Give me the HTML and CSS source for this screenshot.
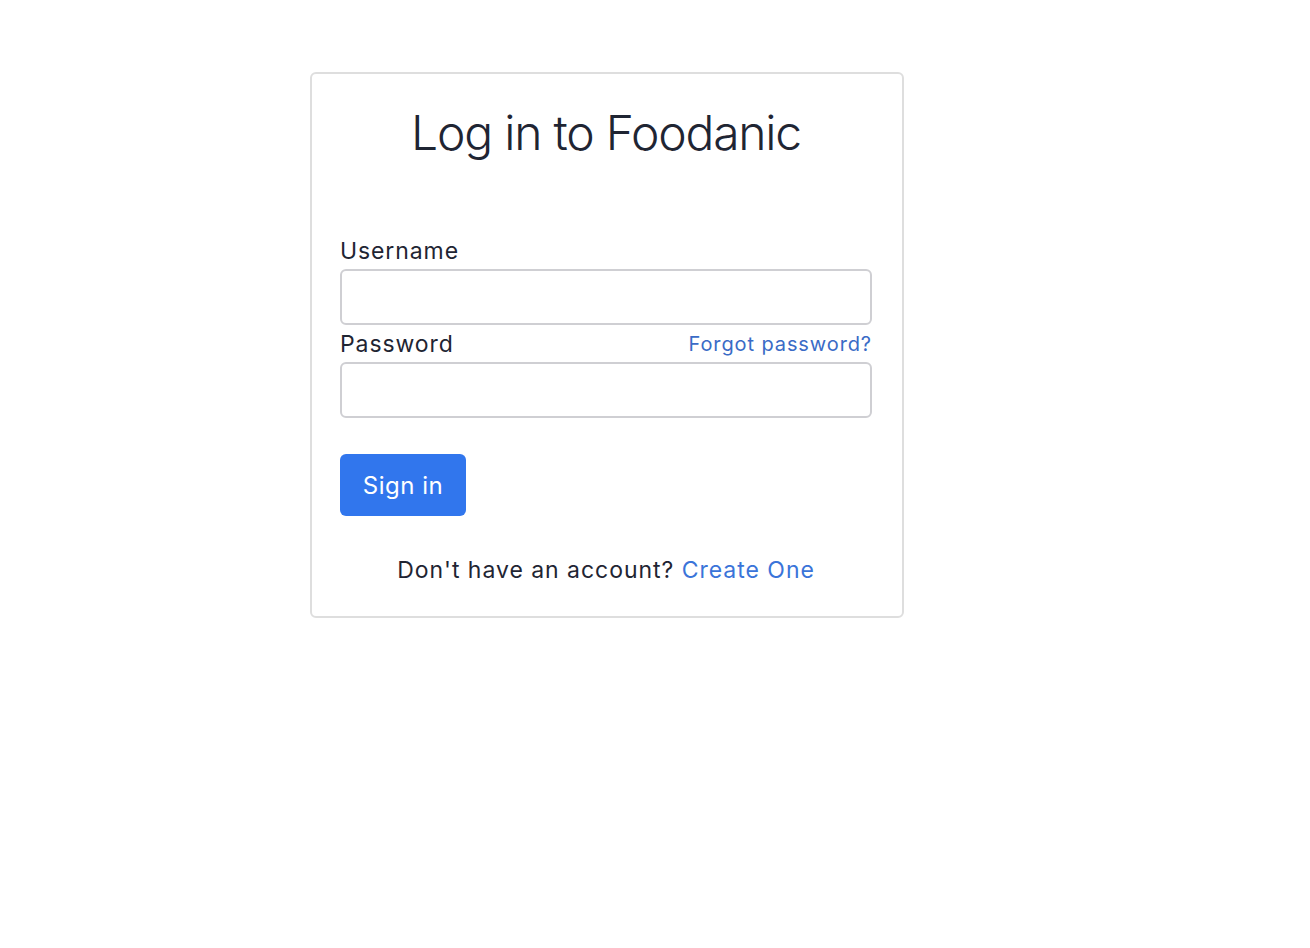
FILE: index.html
```html
<!DOCTYPE html>
<html>
<head>
<meta charset="utf-8">
<link rel="stylesheet" href="styles.css">
</head>
<body>
<div class="card">
  <h1 class="title">Log in to Foodanic</h1>
  <form class="form">
    <label class="label" for="u">Username</label>
    <input class="input" id="u" type="text">
    <div class="row">
      <label class="label" for="p">Password</label>
      <a class="forgot" href="#">Forgot password?</a>
    </div>
    <input class="input" id="p" type="password">
    <button class="btn" type="button">Sign in</button>
  </form>
  <p class="footer">Don't have an account? <a class="link" href="#">Create One</a></p>
</div>
</body>
</html>
```
FILE: styles.css
```css
* { box-sizing: border-box; }
body {
  margin: 0;
  font-family: Inter, "Noto Sans", sans-serif;
  color: #1f2533;
  background: #fff;
}
.card {
  width: 594px;
  margin: 72px 0 0 310px;
  border: 2px solid #dedede;
  border-radius: 6px;
  padding: 27px 30px 31px 28px;
}
.title {
  margin: 0;
  text-align: center;
  font-weight: 300;
  font-size: 48px;
  line-height: 64px;
  letter-spacing: -1.2px;
}
.form {
  display: flex;
  flex-direction: column;
  margin-top: 71px;
}
.label {
  font-size: 23px;
  line-height: 30px;
  letter-spacing: 0.9px;
}
.input {
  height: 56px;
  border: 2px solid #cfcfd3;
  border-radius: 6px;
  margin-top: 3px;
  font-size: 20px;
  padding: 0 12px;
}
.row {
  display: flex;
  justify-content: space-between;
  align-items: flex-end;
  margin-top: 4px;
}
.forgot {
  font-size: 20px;
  color: #3a6bc6;
  text-decoration: none;
  letter-spacing: 0.9px;
  line-height: 30px;
}
.btn {
  align-self: flex-start;
  margin-top: 36px;
  width: 126px;
  height: 62px;
  border: none;
  border-radius: 6px;
  background: #3176ed;
  color: #fff;
  font-family: inherit;
  font-size: 24px;
  letter-spacing: 0.5px;
}
.footer {
  margin: 39px 0 0;
  text-align: center;
  font-size: 23px;
  line-height: 30px;
  letter-spacing: 0.97px;
}
.link {
  color: #3a74d9;
  text-decoration: none;
}
```
